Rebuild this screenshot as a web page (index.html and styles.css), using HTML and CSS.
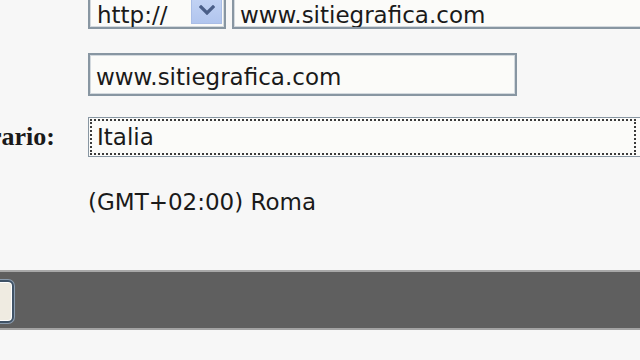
FILE: index.html
```html
<!DOCTYPE html>
<html>
<head>
<meta charset="utf-8">
<link rel="stylesheet" href="styles.css">
</head>
<body>
<div class="page">
  <div class="row r1">
    <div class="label"></div>
    <div class="select proto">
      <span class="val">http://</span>
      <span class="ddbtn">
        <svg width="16" height="10" viewBox="0 0 16 10"><path d="M2 2 L8 8 L14 2" fill="none" stroke="#4a5e88" stroke-width="3.2" stroke-linecap="square"/></svg>
      </span>
    </div>
    <div class="input url">www.sitiegrafica.com</div>
  </div>
  <div class="row r2">
    <div class="label"></div>
    <div class="input site">www.sitiegrafica.com</div>
  </div>
  <div class="row r3">
    <div class="label"><span>Orario:</span></div>
    <div class="select country"><div class="focus">Italia</div></div>
  </div>
  <div class="row r4">
    <div class="label"></div>
    <div class="plain">(GMT+02:00) Roma</div>
  </div>
</div>
<div class="band"><button class="btn"></button></div>
</body>
</html>
```

FILE: styles.css
```css
html, body {
  margin: 0;
  padding: 0;
  background: #f7f7f7;
  overflow: hidden;
}
body {
  width: 640px;
  height: 360px;
  font-family: "DejaVu Sans", sans-serif;
  font-size: 23px;
  line-height: 27px;
  color: #1a1a1a;
}
.page {
  display: flex;
  flex-direction: column;
  margin-top: -16px;
}
.row {
  display: flex;
  flex: none;
}
.label {
  width: 88px;
  flex: none;
  display: flex;
  justify-content: flex-end;
  padding-right: 33px;
  box-sizing: border-box;
  font-family: "Liberation Serif", serif;
  font-weight: bold;
  font-size: 26px;
  white-space: nowrap;
}
.input, .select {
  flex: none;
  box-sizing: border-box;
  border: 2px solid #8896a2;
  box-shadow: inset 0 0 0 1px #d3d9de;
  background: #fbfbf9;
  white-space: nowrap;
  overflow: hidden;
}
.r1 { height: 45px; }
.proto {
  width: 138px;
  height: 45px;
  display: flex;
  align-items: stretch;
  padding: 2px 2px 3px 7px;
}
.proto .val {
  flex: 1;
  padding-top: 14px;
}
.ddbtn {
  width: 31px;
  flex: none;
  display: flex;
  align-items: flex-end;
  justify-content: center;
  padding-bottom: 8px;
  box-sizing: border-box;
  background: linear-gradient(#c9d8f6, #b1c5ee);
  border: 1px solid #a9bde6;
}
.url {
  margin-left: 6px;
  width: 440px;
  height: 45px;
  padding: 16px 0 0 6px;
}
.r2 { margin-top: 24px; }
.site {
  width: 429px;
  height: 43px;
  padding: 9px 0 0 6px;
}
.r3 { margin-top: 21px; }
.r3 .label { padding-top: 6px; }
.country {
  width: 580px;
  height: 40px;
  border: 1px solid #8896a2;
  box-shadow: none;
  padding: 1px;
}
.focus {
  box-sizing: border-box;
  width: 546px;
  height: 100%;
  border: 2px dotted #3a3a3a;
  padding: 3px 0 0 5px;
}
.r4 { margin-top: 32px; }
.plain { white-space: nowrap; }
.band {
  margin-top: 54px;
  height: 60px;
  box-sizing: border-box;
  background: #5f5f5f;
  border-top: 2px solid #a8a8a8;
  border-bottom: 2px solid #a3a3a3;
  padding-top: 8px;
}
.btn {
  display: block;
  margin: 0 0 0 -20px;
  width: 34px;
  height: 43px;
  background: #efebe1;
  border: 2px solid #3f5266;
  border-radius: 6px;
  box-shadow: inset 0 0 0 1px #ffffff, 0 0 0 1px #8a9bad;
  padding: 0;
}
```
